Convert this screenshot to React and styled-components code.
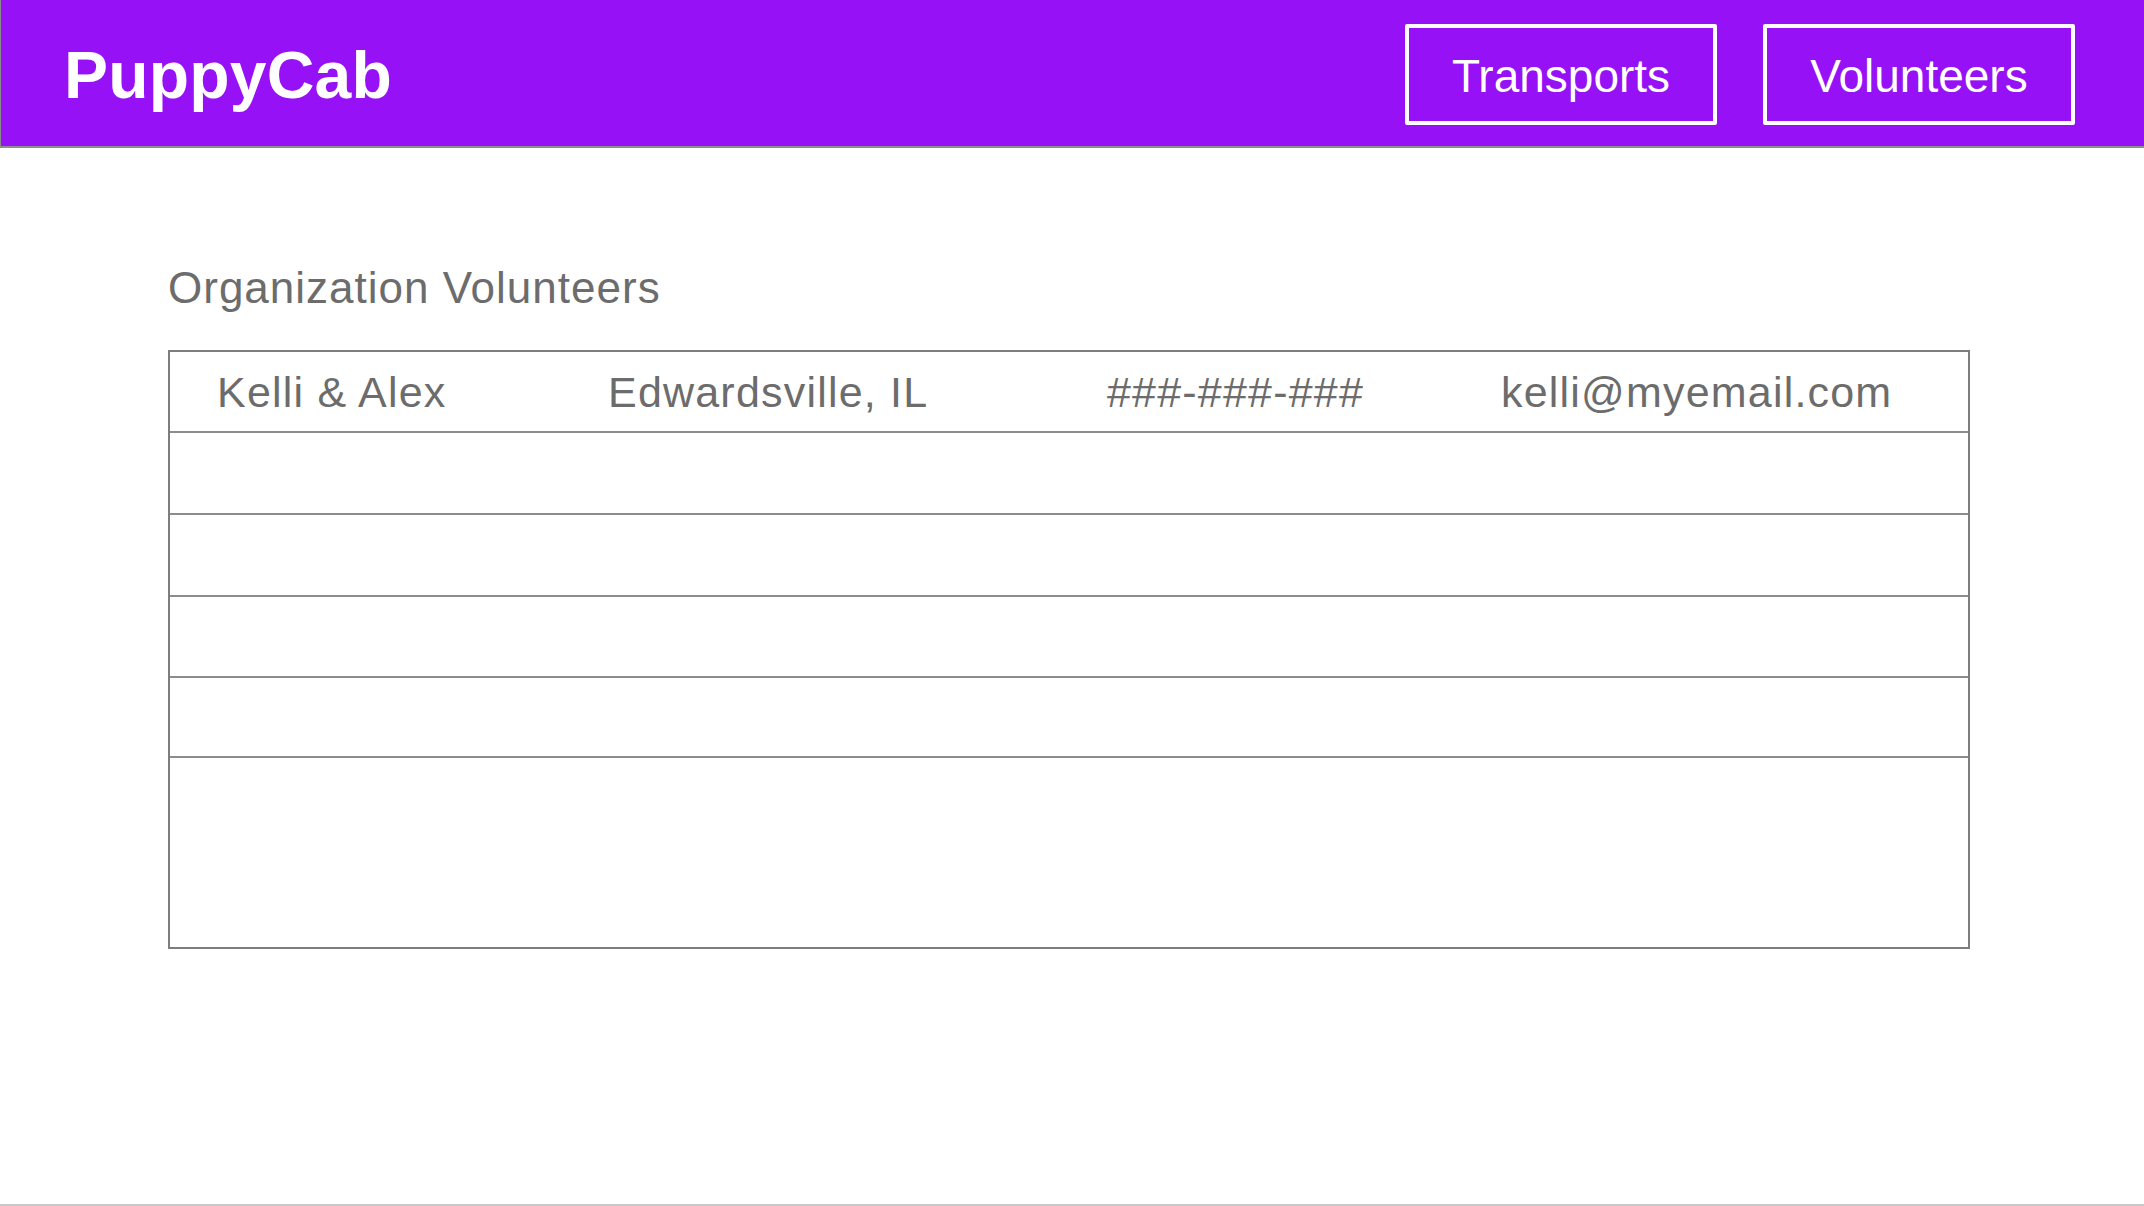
import React from 'react'
import styled, { createGlobalStyle } from 'styled-components'

const GlobalStyle = createGlobalStyle`
  html, body {
    margin: 0;
    padding: 0;
    background: #ffffff;
  }
  body {
    font-family: "Liberation Sans", Arial, Helvetica, sans-serif;
  }
`

const volunteers = [
  { name: 'Kelli & Alex', city: 'Edwardsville, IL', phone: '###-###-###', email: 'kelli@myemail.com' },
  null,
  null,
  null,
  null,
]

const rowHeights = [81, 82, 82, 81, 80]

export default function App() {
  return (
    <Page>
      <GlobalStyle />
      <Nav>
        <Logo>PuppyCab</Logo>
        <NavLinks>
          <NavButton>Transports</NavButton>
          <NavButton>Volunteers</NavButton>
        </NavLinks>
      </Nav>
      <Main>
        <Heading>Organization Volunteers</Heading>
        <Table>
          {volunteers.map((v, i) => (
            <Row key={i} h={rowHeights[i]}>
              {v && (
                <>
                  <Cell>{v.name}</Cell>
                  <Cell>{v.city}</Cell>
                  <Cell>{v.phone}</Cell>
                  <Cell>{v.email}</Cell>
                </>
              )}
            </Row>
          ))}
        </Table>
      </Main>
    </Page>
  )
}

const Page = styled.div`
  width: 2144px;
  height: 1206px;
  box-sizing: border-box;
  border-bottom: 2px solid #c9c9c9;
  overflow: hidden;
`

const Nav = styled.div`
  height: 148px;
  box-sizing: border-box;
  background: #9611f5;
  border-left: 1px solid #8a8a8a;
  border-bottom: 2px solid #8e8e8e;
  display: flex;
  align-items: center;
  justify-content: space-between;
  padding: 0 69px 0 63px;
`

const Logo = styled.h1`
  margin: 4px 0 0 0;
  color: #ffffff;
  font-size: 66px;
  font-weight: 700;
  line-height: 1;
  letter-spacing: 0.2px;
`

const NavLinks = styled.div`
  display: flex;
  gap: 46px;
  margin-top: 2px;
`

const NavButton = styled.button`
  width: 312px;
  height: 101px;
  box-sizing: border-box;
  background: transparent;
  border: 4px solid #ffffff;
  border-radius: 2px;
  color: #ffffff;
  font-family: "Liberation Sans", Arial, Helvetica, sans-serif;
  font-size: 46px;
  padding: 4px 0 0 0;
  cursor: pointer;
`

const Main = styled.div`
  padding: 118px 174px 0 168px;
`

const Heading = styled.h2`
  margin: 0 0 40px 0;
  font-size: 44px;
  line-height: 44px;
  font-weight: 400;
  color: #6c6c6c;
  letter-spacing: 1px;
`

const Table = styled.div`
  height: 599px;
  box-sizing: border-box;
  border: 2px solid #7d7d7d;
`

const Row = styled.div`
  height: ${p => p.h}px;
  box-sizing: border-box;
  border-bottom: 2px solid #8c8c8c;
  display: grid;
  grid-template-columns: 391px 499px 394px 1fr;
  align-items: center;
  padding-left: 47px;
`

const Cell = styled.div`
  font-size: 43px;
  color: #6c6c6c;
  white-space: nowrap;
  letter-spacing: 1.2px;
  padding-top: 2px;
`
